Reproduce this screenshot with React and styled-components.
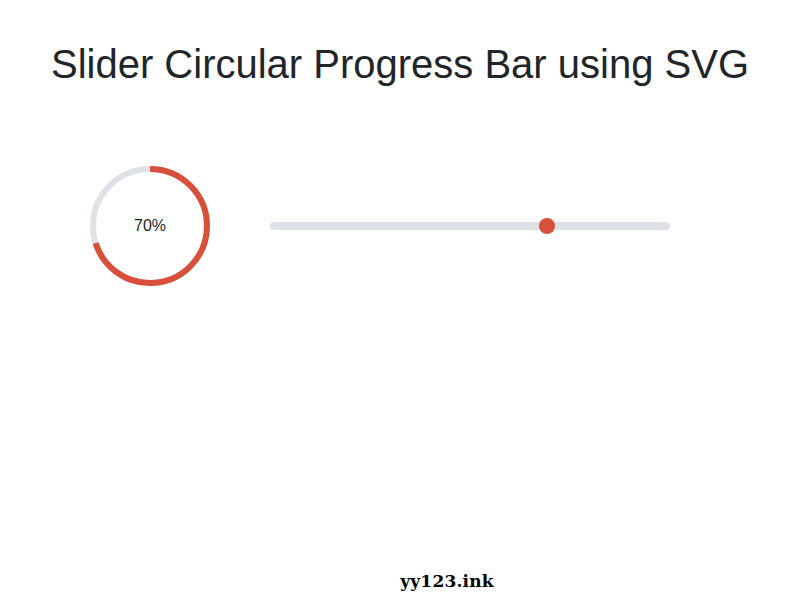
import { useState } from "react";
import styled, { createGlobalStyle } from "styled-components";

const GlobalStyle = createGlobalStyle`
    html, body {
        margin: 0;
        padding: 0;
        background: #fff;
    }
    body {
        font-family: "Liberation Sans", Arial, sans-serif;
        color: #212529;
    }
`;

const Page = styled.div`
    display: flex;
    flex-direction: column;
    min-height: 100vh;
    box-sizing: border-box;
    padding-top: 40px;
`;

const Title = styled.h1`
    margin: 0;
    text-align: center;
    font-size: 40px;
    font-weight: 400;
    line-height: 48px;
    color: #212529;
`;

const Row = styled.div`
    display: flex;
    align-items: center;
    gap: 60px;
    margin-top: 78px;
    padding-left: 90px;
`;

const Ring = styled.div`
    position: relative;
    width: 120px;
    height: 120px;
    flex-shrink: 0;

    > svg {
        display: block;
    }
`;

const Percent = styled.span`
    position: absolute;
    inset: 0;
    display: flex;
    align-items: center;
    justify-content: center;
    font-size: 16px;
    color: #212529;
`;

const Range = styled.input`
    -webkit-appearance: none;
    appearance: none;
    width: 400px;
    height: 8px;
    margin: 0;
    border-radius: 4px;
    background: #dee2e6;
    outline: none;
    cursor: pointer;

    &::-webkit-slider-thumb {
        -webkit-appearance: none;
        appearance: none;
        width: 16px;
        height: 16px;
        border-radius: 50%;
        background: #d9503a;
        border: none;
    }
    &::-moz-range-thumb {
        width: 16px;
        height: 16px;
        border-radius: 50%;
        background: #d9503a;
        border: none;
    }
`;

const Footer = styled.footer`
    margin-top: auto;
    padding-bottom: 9px;
    text-align: center;
    padding-left: 94px;
    font-family: "DejaVu Serif", "Liberation Serif", serif;
    font-weight: 700;
    font-size: 17px;
    letter-spacing: 0.2px;
    color: #000;
`;

const R = 57;
const CIRC = 2 * Math.PI * R;

function CircleProgress({ value }) {
    return (
        <Ring>
            <svg width="120" height="120" viewBox="0 0 120 120">
                <circle cx="60" cy="60" r={R} fill="none" stroke="#dee2e6" strokeWidth="6" />
                <circle
                    cx="60"
                    cy="60"
                    r={R}
                    fill="none"
                    stroke="#d9503a"
                    strokeWidth="6"
                    strokeDasharray={CIRC}
                    strokeDashoffset={CIRC * (1 - value / 100)}
                    transform="rotate(-90 60 60)"
                />
            </svg>
            <Percent>{value}%</Percent>
        </Ring>
    );
}

export default function App() {
    const [value, setValue] = useState(70);

    return (
        <Page>
            <GlobalStyle />
            <Title>Slider Circular Progress Bar using SVG</Title>
            <Row>
                <CircleProgress value={value} />
                <Range
                    type="range"
                    min="0"
                    max="100"
                    value={value}
                    onChange={(e) => setValue(Number(e.target.value))}
                />
            </Row>
            <Footer>yy123.ink</Footer>
        </Page>
    );
}
